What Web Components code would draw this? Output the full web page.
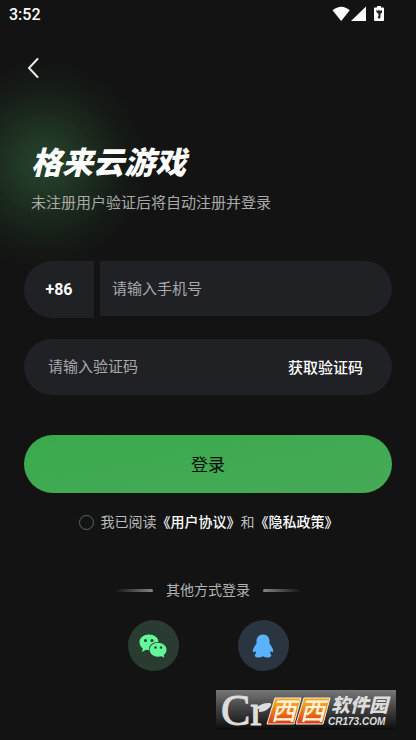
<!DOCTYPE html>
<html lang="zh-CN">
<head>
<meta charset="utf-8">
<meta name="viewport" content="width=device-width, initial-scale=1">
<title>格来云游戏</title>
<style>
html, body { margin: 0; min-height: 100%; background: #131313; }
body { font-family: Roboto, "Noto Sans CJK SC", sans-serif; color: #fff; }
</style>
</head>
<body>
<login-page></login-page>
<script>
const define = (name, html, setup) => customElements.define(name, class extends HTMLElement {
  constructor() {
    super();
    this.attachShadow({ mode: "open" }).innerHTML =
      "<style>*{box-sizing:border-box}button,input{font:inherit;color:inherit;border:0;background:none;margin:0;padding:0}button{cursor:pointer}</style>" + html;
    if (setup) setup(this, this.shadowRoot);
  }
});

define("status-bar", `
<style>
:host { display: flex; justify-content: space-between; align-items: center; height: 28px; padding: 0 31px 0 9px; font-size: 16px; font-weight: 500; }
svg { display: block; }
</style>
<span>3:52</span>
<svg width="53" height="16" viewBox="0 0 53 16" fill="#fff" aria-hidden="true">
  <path d="M0.5 4.3Q9.500 -3 17.700 4.300L9.200 15Z"/>
  <path d="M19 15L34 0.500V15Z"/>
  <path d="M45 0h4v1.500h2.200q.8 0 .8.800V14q0 1-.8 1H43q-1 0-1-1V2.300q0-.8.900-.8H45Z"/>
  <path d="M44 4l2 1 1-1.500 1 1.500 2-1v2.500L48.500 8v3.500L47 13l-1.500-2 1-1V8L44.500 6Z" fill="#222"/>
</svg>`);

define("nav-bar", `
<style>
:host { display: flex; height: 80px; align-items: center; padding: 0 20px; }
button { display: grid; place-items: center; width: 26px; height: 32px; }
</style>
<button type="button" aria-label="返回"><svg width="12" height="20" viewBox="0 0 12 20" fill="none" stroke="#e6e6e6" stroke-width="2" stroke-linecap="round"><path d="M10.500 1L2 10l8.500 9"/></svg></button>`);

define("brand-header", `
<style>
:host { display: block; padding: 37px 31px 0; }
h1 { margin: 0; font-size: 31px; line-height: 38px; font-weight: 900; font-style: italic; white-space: nowrap; }
p { margin: 9px 0 0; font-size: 15px; line-height: 22px; color: #a8aaa8; }
</style>
<h1><slot name="title"></slot></h1><p><slot></slot></p>`);

define("phone-field", `
<style>
:host { display: flex; gap: 6px; align-items: flex-start; }
button { width: 70px; height: 57px; border-radius: 29px 0 0 29px; background: #202125; font-size: 16px; font-weight: 700; }
input { flex: 1; min-width: 0; height: 55px; padding: 0 12px; border-radius: 0 28px 28px 0; background: #202125; font-size: 15px; }
input::placeholder { color: #a8a9ab; opacity: 1; }
</style>
<button type="button" aria-label="国家代码 +86">+86</button><input type="tel" aria-label="手机号" placeholder="请输入手机号">`);

define("code-field", `
<style>
:host { display: flex; height: 56px; border-radius: 28px; background: #202125; padding: 0 29px 0 24px; font-size: 15px; }
input { flex: 1; min-width: 0; }
input::placeholder { color: #a8a9ab; opacity: 1; }
button { padding-bottom: 2px; font-weight: 500; white-space: nowrap; }
</style>
<input type="text" inputmode="numeric" aria-label="验证码" placeholder="请输入验证码"><button type="button">获取验证码</button>`);

define("primary-button", `
<style>
:host { display: block; }
button { width: 100%; height: 58px; padding-bottom: 2px; border-radius: 29px; background: linear-gradient(170deg, #3aaa4c, #46aa57); color: #080d09; font-size: 17px; }
</style>
<button type="submit"><slot></slot></button>`);

define("agreement-check", `
<style>
:host { display: flex; justify-content: center; align-items: center; gap: 7px; font-size: 14px; line-height: 22px; color: #bcbcbc; white-space: nowrap; }
input { appearance: none; width: 15px; height: 15px; border: 1px solid #526b61; border-radius: 50%; }
input:checked { background: #3fab50; }
a { color: #fff; font-weight: 500; text-decoration: none; }
</style>
<input type="checkbox" id="agree"><span><label for="agree">我已阅读</label><a href="#terms">《用户协议》</a>和<a href="#privacy">《隐私政策》</a></span>`);

define("line-divider", `
<style>
:host { display: flex; justify-content: center; align-items: center; gap: 13px; font-size: 14px; line-height: 22px; color: #b4b4b4; }
i { width: 38px; height: 3px; border-radius: 2px; background: linear-gradient(90deg, transparent, #858585); }
i:last-child { background: linear-gradient(270deg, transparent, #858585); }
</style>
<i></i><span><slot></slot></span><i></i>`);

define("social-button", `
<style>
:host { display: block; }
button { display: grid; place-items: center; width: 51px; height: 51px; border-radius: 50%; background: var(--disc); }
</style>
<button type="button"><slot></slot></button>`,
(el, root) => root.querySelector("button").setAttribute("aria-label", el.getAttribute("label") || "登录"));

define("site-watermark", `
<style>
:host { display: block; width: 180px; height: 40px; background: linear-gradient(#777, #444 45%, #0c0c0c); }
svg { display: block; overflow: visible; }
text { font-family: "Liberation Sans", "Noto Sans CJK SC", sans-serif; }
.mark { font-family: "Liberation Serif", serif; }
</style>
<svg width="180" height="40" viewBox="0 0 180 40">
  <defs><linearGradient id="o" x1="0" y1="0" x2="0" y2="1"><stop offset=".2" stop-color="#f5a51f"/><stop offset=".9" stop-color="#dc4616"/></linearGradient></defs>
  <text class="mark" x="5" y="35" font-size="44" fill="#ddd" stroke="#ddd">Cr</text>
  <path d="M43 22Q42 12 54 13Q57 14 53 18Q49 22 43 22Z" fill="#ddd"/>
  <g fill="url(#o)" stroke="#f8eee0" stroke-width="1">
    <path d="M59 8h26l-7 26H51Z"/><path d="M88 8h26l-7 26H80Z"/>
  </g>
  <g fill="#fff3dc" font-size="25" font-weight="500" font-style="italic"><text x="55" y="30">西</text><text x="84" y="30">西</text></g>
  <text x="115" y="22" font-size="19" font-weight="900" font-style="italic" fill="#ddd">软件园</text>
  <text x="112" y="35" font-size="10" font-weight="700" font-style="italic" fill="#ddd">CR173.COM</text>
</svg>`);

define("login-page", `
<style>
:host { display: block; position: relative; min-height: 100vh; background: radial-gradient(circle 104px at 44px 164px, #25422a 0%, #223a26 22%, #1b291d 50%, #151a16 78%, #131313 100%), #131313; }
form { display: flex; flex-direction: column; padding: 47px 24px 0; margin: 0; }
code-field { margin-top: 21px; }
primary-button { margin-top: 40px; }
agreement-check { margin-top: 18px; padding-left: 1px; }
line-divider { margin-top: 46px; }
.social { display: flex; justify-content: center; gap: 59px; margin-top: 19px; }
site-watermark { position: absolute; right: 20px; bottom: 10px; }
</style>
<status-bar></status-bar>
<nav-bar></nav-bar>
<brand-header><span slot="title">格来云游戏</span>未注册用户验证后将自动注册并登录</brand-header>
<form>
  <phone-field></phone-field>
  <code-field></code-field>
  <primary-button>登录</primary-button>
  <agreement-check></agreement-check>
  <line-divider>其他方式登录</line-divider>
  <div class="social">
    <social-button label="微信登录" style="--disc:#2a3c31">
      <svg width="28" height="24" viewBox="0 0 28 24" fill="#62f799"><path d="M10 .5c5.300 0 9.500 3.300 9.500 7.500v.1C13.800 8 10 11.200 10 15v1.200l-3-.5L3 18l.8-3.700C1.500 13 .5 10.600.5 8 .5 3.800 4.700.5 10 .5Z"/><path d="M19 8.800c4.700 0 8.500 3 8.500 7 0 2.200-1 3.900-2.700 5.100l.5 2.600-3-1.200-3.300.5c-4.700 0-8.300-3-8.300-7 0-4 3.600-7 8.300-7Z"/><g fill="#2a3c31"><circle cx="6.500" cy="6.500" r="1.500"/><circle cx="13" cy="6.500" r="1.500"/><circle cx="16.500" cy="13.500" r="1.200"/><circle cx="22" cy="13.500" r="1.200"/></g></svg>
    </social-button>
    <social-button label="QQ登录" style="--disc:#2b3541">
      <svg width="22" height="24" viewBox="0 0 22 24" fill="#5ab2ff"><path d="M11 .5c4.200 0 6.500 3 6.500 7v2c2.500 3.300 4.500 7 3.400 8.500-.6.500-1.400-.2-2-1l-1 2.500c1.700.8 1.700 2 .8 2.900-1.400 1.400-5 1.400-7.700-.2-2.700 1.600-6.300 1.600-7.700.2-.9-.9-.9-2.100.8-2.900L3.100 17c-.6.800-1.400 1.500-2 1C0 16.500 2 12.800 4.500 9.500v-2c0-4 2.300-7 6.500-7Z"/></svg>
    </social-button>
  </div>
</form>
<site-watermark></site-watermark>`);
</script>
</body>
</html>
